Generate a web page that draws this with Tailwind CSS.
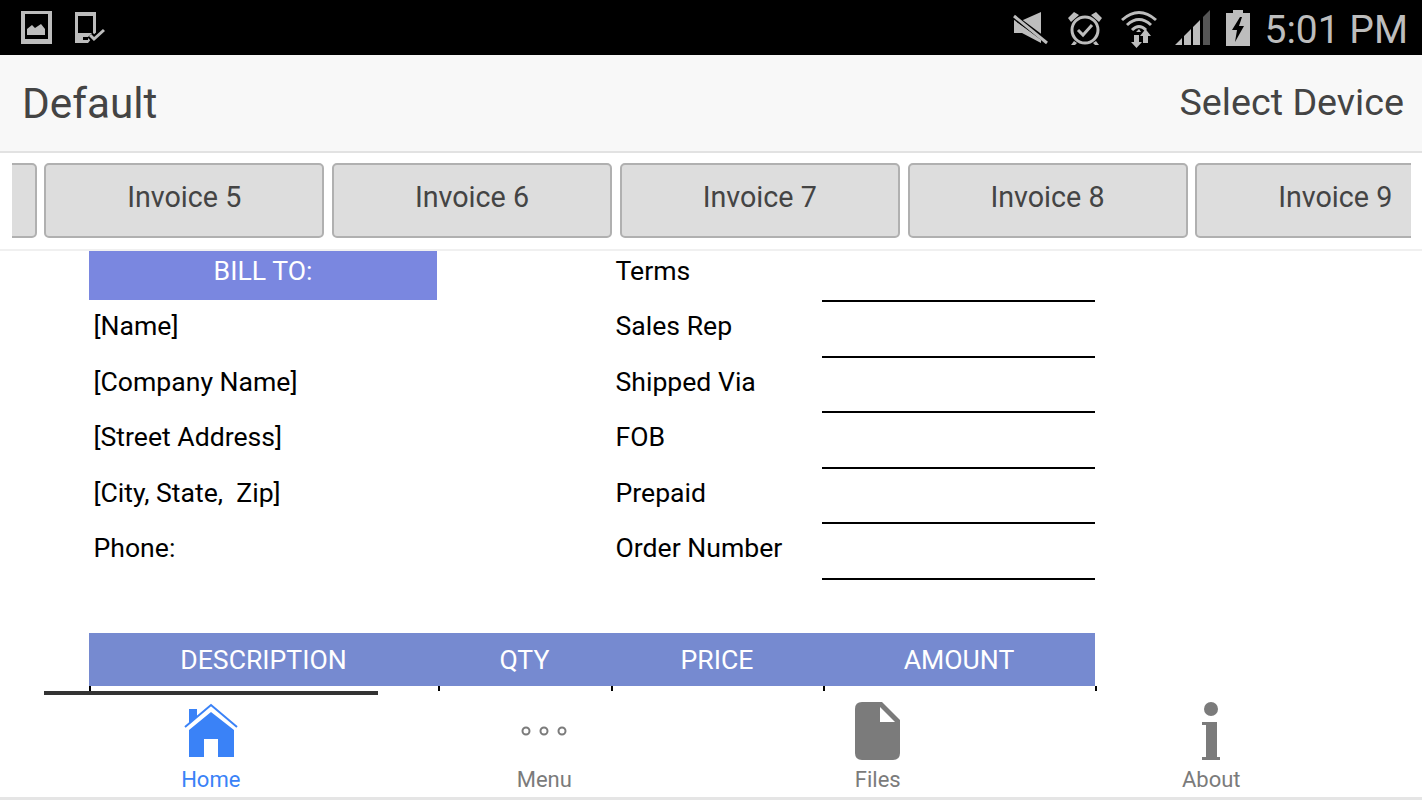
<!DOCTYPE html>
<html lang="en">
<head>
    <meta charset="UTF-8">
    <title>Invoice</title>
    <script src="https://cdn.jsdelivr.net/npm/@tailwindcss/browser@4"></script>
</head>
<body class="bg-white font-['Roboto',sans-serif] overflow-hidden">
<div class="w-[1422px] h-[800px] flex flex-col overflow-hidden">
    <!-- status bar -->
    <div class="h-[55px] bg-black flex items-center text-[#bdbdbd] shrink-0">
        <svg class="ml-[21px]" width="31" height="33" viewBox="0 0 31 33"><path fill="#bdbdbd" fill-rule="evenodd" d="M0 0H31V33H0ZM4 3V28H27V3Z"/><path fill="#bdbdbd" d="M6 24V18L11 14L14 17L20 13L24 18V24Z"/></svg>
        <svg class="ml-[23px]" width="31" height="33" viewBox="0 0 31 33"><path fill="#bdbdbd" fill-rule="evenodd" d="M0 1H21V22L13 32H0ZM3 5H18V22H3Z"/><path fill="#000" d="M8 26H13V29H8Z"/><path fill="none" stroke="#000" stroke-width="7" d="M15 24L19 28L29 19"/><path fill="none" stroke="#bdbdbd" stroke-width="3" d="M15 24L19 28L29 19"/></svg>
        <div class="flex-1"></div>
        <svg width="36" height="34" viewBox="0 0 36 34"><path fill="#bdbdbd" d="M1 9H10L28 1V24ZM1 12L20 26L28 32V28L1 9V22H9L28 32V28Z"/><path fill="none" stroke="#000" stroke-width="5" d="M0 5L35 31"/><path fill="none" stroke="#bdbdbd" stroke-width="3" d="M1 5L34 32"/></svg>
        <svg class="ml-[18px]" width="36" height="36" viewBox="0 0 36 36"><circle cx="18" cy="20" r="13" fill="none" stroke="#bdbdbd" stroke-width="3"/><path fill="none" stroke="#bdbdbd" stroke-width="3" d="M11 20L16 25L25 15"/><path fill="#bdbdbd" d="M1 8L7 2L12 5L4 12ZM35 8L29 2L24 5L32 12ZM7 31L4 35H8L10 33ZM29 31L32 35H28L26 33Z"/></svg>
        <svg class="ml-[17px]" width="38" height="40" viewBox="0 0 38 40"><g fill="none" stroke="#bdbdbd" stroke-width="3"><path d="M2 12Q19 -3 36 12"/><path d="M7 17Q19 6 31 17"/><path d="M12 22Q19 15 26 22"/></g><path fill="#bdbdbd" d="M16 24H21L19 21ZM14 27H19V34H22L16.500 40L11 34H14ZM20 28L25.500 21L31 28H28V35H23V28Z"/></svg>
        <svg class="ml-[17px]" width="36" height="36" viewBox="0 0 36 36"><path fill="#bdbdbd" d="M0 35L7 28V35ZM9 26L16 19V35H9ZM18 17L25 10V35H18Z"/><path fill="#555" d="M28 7L35 0V35H28Z"/></svg>
        <svg class="ml-[15px]" width="24" height="36" viewBox="0 0 24 36"><path fill="#bdbdbd" fill-rule="evenodd" d="M7 0H17V3H24V36H0V3H7ZM14 7L6 20H11L9 32L18 16H13L16 7Z"/></svg>
        <span class="ml-[14px] mr-[14px] pt-[6px] text-[39px] font-normal">5:01 PM</span>
    </div>
    <!-- header -->
    <div class="h-[98px] bg-[#f8f8f8] border-b-2 border-[#e2e2e2] flex items-center justify-between pl-[22px] pr-[18px] text-[#444] shrink-0">
        <span class="text-[42.300px] pt-[2px]">Default</span>
        <span class="text-[37.700px] pb-[2px]">Select Device</span>
    </div>
    <!-- invoice tabs -->
    <div class="h-[98px] border-b-2 border-[#f0f0f0] pt-[10px] pl-[12px] pr-[11px] shrink-0">
        <div class="w-full overflow-hidden">
            <div class="flex gap-[7.750px] ml-[-255.500px] text-[#444] text-[28.700px]">
                <div class="w-[280px] h-[75px] shrink-0 bg-[#dddddd] border-2 border-[#b0b0b0] rounded-[5px]"></div>
                <div class="w-[280px] h-[75px] shrink-0 bg-[#dddddd] border-2 border-[#b0b0b0] rounded-[5px] flex items-center justify-center pb-[6px]">Invoice 5</div>
                <div class="w-[280px] h-[75px] shrink-0 bg-[#dddddd] border-2 border-[#b0b0b0] rounded-[5px] flex items-center justify-center pb-[6px]">Invoice 6</div>
                <div class="w-[280px] h-[75px] shrink-0 bg-[#dddddd] border-2 border-[#b0b0b0] rounded-[5px] flex items-center justify-center pb-[6px]">Invoice 7</div>
                <div class="w-[280px] h-[75px] shrink-0 bg-[#dddddd] border-2 border-[#b0b0b0] rounded-[5px] flex items-center justify-center pb-[6px]">Invoice 8</div>
                <div class="w-[280px] h-[75px] shrink-0 bg-[#dddddd] border-2 border-[#b0b0b0] rounded-[5px] flex items-center justify-center pb-[6px]">Invoice 9</div>
            </div>
        </div>
    </div>
    <!-- invoice sheet -->
    <div class="flex-1 pl-[89px] text-[26.600px] text-black overflow-hidden">
        <div class="grid grid-cols-[349px_178px_206px_273px] w-[1006px] auto-rows-[55.6px]">
            <div class="bg-[#7a87e0] text-white text-center leading-[40px] h-[49px] mr-[1px]">BILL TO:</div>
            <div class="col-start-3 leading-[40px] ml-[-0.500px]">Terms</div>
            <div class="border-b-2 border-black h-[51px]"></div>

            <div class="col-start-1 pl-[4.500px] leading-[38px]">[Name]</div>
            <div class="col-start-3 leading-[38px] ml-[-0.500px]">Sales Rep</div>
            <div class="border-b-2 border-black h-[51px]"></div>

            <div class="col-start-1 pl-[4.500px] leading-[40px]">[Company Name]</div>
            <div class="col-start-3 leading-[40px] ml-[-0.500px]">Shipped Via</div>
            <div class="border-b-2 border-black h-[51px]"></div>

            <div class="col-start-1 pl-[4.500px] leading-[38px]">[Street Address]</div>
            <div class="col-start-3 leading-[38px] ml-[-0.500px]">FOB</div>
            <div class="border-b-2 border-black h-[51px]"></div>

            <div class="col-start-1 pl-[4.500px] leading-[40px] whitespace-pre">[City, State,  Zip]</div>
            <div class="col-start-3 leading-[40px] ml-[-0.500px]">Prepaid</div>
            <div class="border-b-2 border-black h-[51px]"></div>

            <div class="col-start-1 pl-[4.500px] leading-[38px]">Phone:</div>
            <div class="col-start-3 leading-[38px] ml-[-0.500px] whitespace-nowrap">Order Number</div>
            <div class="border-b-2 border-black h-[51px]"></div>
        </div>
        <div class="mt-[48px] grid grid-cols-[349px_173px_212px_272px] w-[1006px] h-[53px] bg-[#768ad0] text-white text-center leading-[53px]">
            <div>DESCRIPTION</div>
            <div>QTY</div>
            <div>PRICE</div>
            <div>AMOUNT</div>
        </div>
        <div class="grid grid-cols-[349px_173px_212px_274px] w-[1008px] h-[5px]">
            <div class="border-l-2 border-black"></div>
            <div class="border-l-2 border-black"></div>
            <div class="border-l-2 border-black"></div>
            <div class="border-x-2 border-black"></div>
        </div>
    </div>
    <!-- tab bar -->
    <div class="h-[109px] border-b-[3px] border-[#e5e5e5] grid grid-cols-4 px-[44px] shrink-0 text-[22px] text-[#7b7b7b]">
        <div class="flex flex-col items-center text-[#3a82f7] border-t-[4px] border-[#333]">
            <div class="h-[63px] flex items-end">
                <svg width="54" height="55" viewBox="0 0 54 55"><path fill="#3a82f7" d="M5 6H13V14L5 21ZM27 9L50 27V54H34V36H20V54H5V27Z"/><path fill="none" stroke="#3a82f7" stroke-width="2" d="M1 24L27 2L53 24"/></svg>
            </div>
            <span class="leading-[28px] mt-[8px]">Home</span>
        </div>
        <div class="flex flex-col items-center border-t-[4px] border-transparent">
            <div class="h-[63px] flex items-end pb-[21px]">
                <svg width="46" height="12" viewBox="0 0 46 12"><g fill="none" stroke="#7b7b7b" stroke-width="2"><circle cx="5" cy="6" r="3.500"/><circle cx="23" cy="6" r="3.500"/><circle cx="41" cy="6" r="3.500"/></g></svg>
            </div>
            <span class="leading-[28px] mt-[8px]">Menu</span>
        </div>
        <div class="flex flex-col items-center border-t-[4px] border-transparent">
            <div class="h-[65px] flex items-end">
                <svg width="45" height="58" viewBox="0 0 45 58"><path fill="#7b7b7b" d="M7 0H27L45 18V51Q45 58 38 58H7Q0 58 0 51V7Q0 0 7 0Z"/><path fill="#fff" d="M25 5L40 20H25Z"/></svg>
            </div>
            <span class="leading-[28px] mt-[6px]">Files</span>
        </div>
        <div class="flex flex-col items-center border-t-[4px] border-transparent">
            <div class="h-[65px] flex items-end">
                <svg width="20" height="58" viewBox="0 0 20 58"><circle cx="10" cy="7" r="7" fill="#7b7b7b"/><path fill="#7b7b7b" d="M1 20H16V55H19V58H1V55H5V23H1Z"/></svg>
            </div>
            <span class="leading-[28px] mt-[6px]">About</span>
        </div>
    </div>
</div>
</body>
</html>
